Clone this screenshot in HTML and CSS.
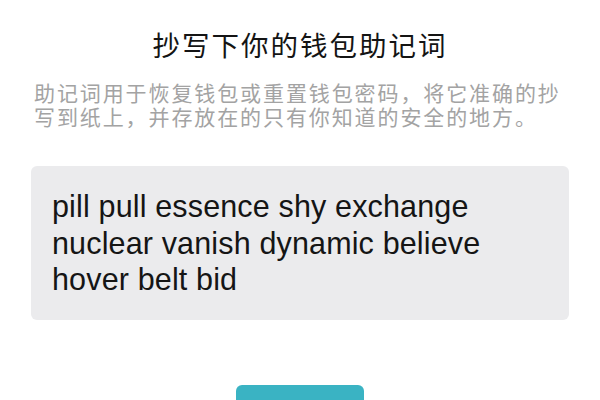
FILE: index.html
```html
<html>

<head>
    <meta charset="utf-8">
    <title>备份助记词</title>

    <link rel="stylesheet" href="styles.css">
</head>

<body>

    <main class="backup">
        <h1 class="backup-title">抄写下你的钱包助记词</h1>

        <p class="backup-hint">助记词用于恢复钱包或重置钱包密码，将它准确的抄写到纸上，并存放在的只有你知道的安全的地方。</p>

        <div class="mnemonic">
            pill pull essence shy exchange<br>
            nuclear vanish dynamic believe<br>
            hover belt bid
        </div>

        <button class="next-btn" type="button"></button>
    </main>

</body>

</html>
```

FILE: styles.css
```css
body {
    margin: 0;
    background: #ffffff;
    font-family: "Noto Sans CJK SC", "Noto Sans", sans-serif;
    overflow: hidden;
}

.backup {
    display: flex;
    flex-direction: column;
}

.backup-title {
    margin: 26px 0 0;
    font-size: 27.5px;
    font-weight: normal;
    line-height: 36px;
    letter-spacing: 2px;
    text-align: center;
    color: #141414;
}

.backup-hint {
    width: 535px;
    margin: 18px 0 0 34px;
    font-size: 21px;
    line-height: 24px;
    letter-spacing: 1.9px;
    color: #a3a3a3;
}

.mnemonic {
    margin: 38px 31px 0 31px;
    padding: 22px 21px;
    background: #ebebed;
    border-radius: 6px;
    font-family: "Liberation Sans", Arial, sans-serif;
    font-size: 30.5px;
    line-height: 36.5px;
    letter-spacing: 0.15px;
    color: #151515;
}

.next-btn {
    align-self: center;
    width: 128px;
    height: 44px;
    margin-top: 65px;
    border: none;
    border-radius: 6px;
    background: #3ab3c3;
}
```
